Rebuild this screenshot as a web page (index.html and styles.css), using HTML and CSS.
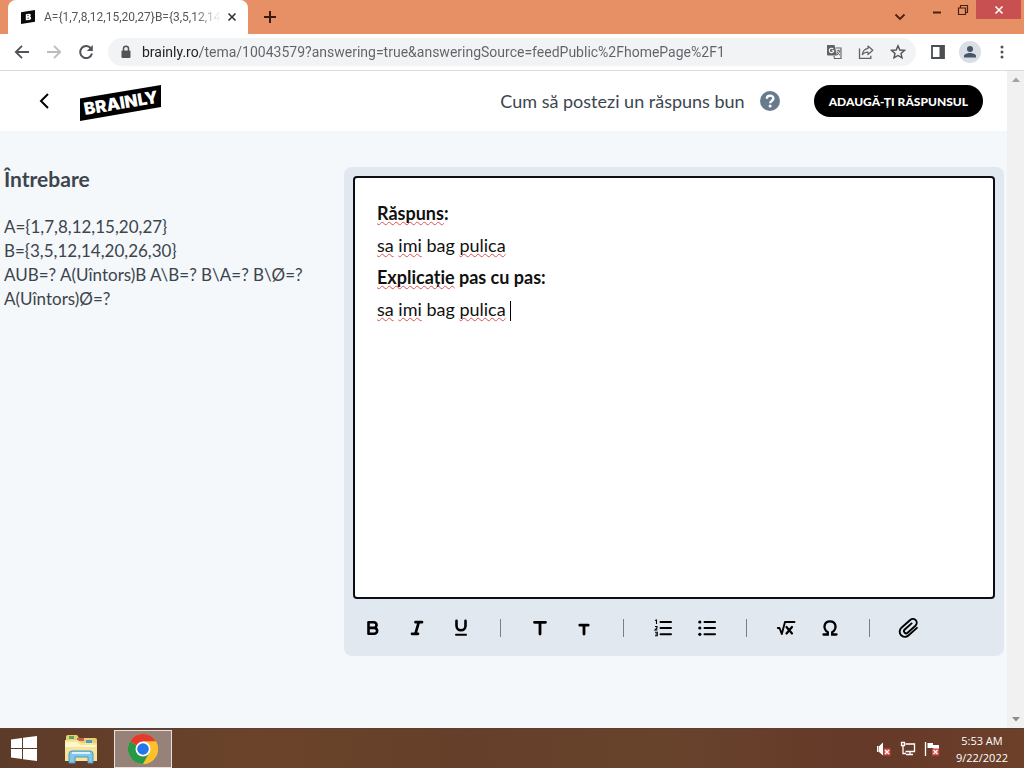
FILE: index.html
```
<!DOCTYPE html>
<html lang="ro">
<head>
<meta charset="utf-8">
<meta name="viewport" content="width=device-width, initial-scale=1">
<title>Brainly</title>
<link rel="stylesheet" href="styles.css">
</head>
<body>
<div class="screen">
  <div class="tabstrip">
    <div class="tab">
      <svg class="favicon" width="14" height="14" viewBox="0 0 14 14" aria-hidden="true"><path d="M0 2.200 14 0v11.800L0 14z" fill="#0b0b0b"/><path d="M4.800 4.200 8 3.700c2-.2 2.300 1.900 1 2.700 1.800.3 1.500 3.300-.8 3.500l-3.400.4z" fill="#fff"/><path d="M6.500 5.500h1M6.500 8.200h1.300" stroke="#0b0b0b" stroke-width="1"/></svg>
      <span class="tab-title">A={1,7,8,12,15,20,27}B={3,5,12,14</span>
      <button class="tab-close" aria-label="Close tab"><svg width="10" height="10" viewBox="0 0 10 10"><path d="M1.500 1.500l7 7M8.500 1.500l-7 7" stroke="#333" stroke-width="1.600"/></svg></button>
    </div>
    <button class="new-tab" aria-label="New tab"><svg width="14" height="14" viewBox="0 0 14 14"><path d="M7 1v12M1 7h12" stroke="#3a1c10" stroke-width="2"/></svg></button>
    <div class="window-controls">
      <button class="search-tabs" aria-label="Search tabs"><svg width="12" height="8" viewBox="0 0 12 8"><path d="M1.500 1.500 6 6l4.500-4.500" fill="none" stroke="#4a2010" stroke-width="1.800"/></svg></button>
      <button class="win-btn" aria-label="Minimize"><svg width="12" height="12" viewBox="0 0 12 12"><path d="M2 8.500h8" stroke="#4a2010" stroke-width="2"/></svg></button>
      <button class="win-btn" aria-label="Restore"><svg width="12" height="12" viewBox="0 0 12 12"><path d="M1.500 4h7v6.500h-7zM3.500 4V1.500h7v7h-2" fill="none" stroke="#4a2010" stroke-width="1.200"/></svg></button>
      <button class="win-btn win-close" aria-label="Close"><svg width="10" height="10" viewBox="0 0 10 10"><path d="M1.500 1.500l7 7M8.500 1.500l-7 7" stroke="#fff" stroke-width="1.600"/></svg></button>
    </div>
  </div>

  <div class="browser-bar">
    <button class="nav-btn" aria-label="Back"><svg width="16" height="16" viewBox="0 0 16 16"><path d="M15 8H2M8 1.800 1.800 8 8 14.200" fill="none" stroke="#505357" stroke-width="1.800"/></svg></button>
    <button class="nav-btn" aria-label="Forward"><svg width="16" height="16" viewBox="0 0 16 16"><path d="M1 8h13M8 1.800 14.200 8 8 14.200" fill="none" stroke="#b9bbbe" stroke-width="1.800"/></svg></button>
    <button class="nav-btn" aria-label="Reload"><svg width="16" height="16" viewBox="0 0 16 16"><path d="M13.200 4.800A6 6 0 1 0 14 9.500" fill="none" stroke="#505357" stroke-width="2"/><path d="M14.800 1v6h-6z" fill="#505357"/></svg></button>
    <div class="omnibox">
      <svg width="10" height="14" viewBox="0 0 10 14" aria-hidden="true"><path d="M2.500 6V3.800a2.500 2.500 0 0 1 5 0V6" fill="none" stroke="#505357" stroke-width="1.500"/><rect x="0.500" y="5.500" width="9" height="7.500" rx="1" fill="#505357"/></svg>
      <input class="url" type="text" aria-label="Address" value="brainly.ro/tema/10043579?answering=true&amp;answeringSource=feedPublic%2FhomePage%2F1">
      <button class="omni-btn" aria-label="Translate"><svg width="16" height="16" viewBox="0 0 16 16"><path d="M1 1h7.500l2.500 10.500H2a1 1 0 0 1-1-1z" fill="#5f6368"/><path d="M9.500 4H15v10.500H8.500L8 12" fill="none" stroke="#5f6368" stroke-width="1.100"/><path d="M7.200 5A2.200 2.200 0 1 0 7.700 6.800H5.700" fill="none" stroke="#fff" stroke-width="1.100"/><path d="M10.500 6.800h4M12.500 5.800v1M13.600 7c-.3 1.800-1.300 3-2.600 4M11.200 8c.5 1.500 1.500 2.400 2.800 3.200" fill="none" stroke="#5f6368"/></svg></button>
      <button class="omni-btn" aria-label="Share"><svg width="16" height="16" viewBox="0 0 16 16"><path d="M1.500 4.500v9.800h11.300v-2.500" fill="none" stroke="#5f6368" stroke-width="1.300"/><path d="M10 2l4.800 4.200L10 10.500V8.200c-2.500-.1-4.300.7-5.700 2.500.4-3.300 2.200-5.800 5.700-6.400z" fill="none" stroke="#5f6368" stroke-width="1.200" stroke-linejoin="round"/></svg></button>
      <button class="omni-btn" aria-label="Bookmark"><svg width="16" height="16" viewBox="0 0 16 16"><path d="M8 1.800l1.800 4.200 4.700.4-3.500 3 1 4.500L8 11.500l-4 2.400 1-4.500-3.500-3 4.700-.4z" fill="none" stroke="#505357" stroke-width="1.400"/></svg></button>
    </div>
    <button class="bar-btn" aria-label="Side panel"><svg width="16" height="16" viewBox="0 0 16 16"><path d="M2 2h12v12H2z" fill="none" stroke="#4b4f54" stroke-width="1.800"/><path d="M9.500 2H14v12H9.500z" fill="#4b4f54"/></svg></button>
    <button class="bar-btn profile" aria-label="Profile"><svg width="14" height="14" viewBox="0 0 14 14"><circle cx="7" cy="4" r="3" fill="#46556a"/><path d="M1 12.500V11c0-2 3.500-3 6-3s6 1 6 3v1.500z" fill="#46556a"/></svg></button>
    <button class="bar-btn" aria-label="Menu"><svg width="4" height="14" viewBox="0 0 4 14"><g fill="#505357"><circle cx="2" cy="2" r="1.500"/><circle cx="2" cy="7" r="1.500"/><circle cx="2" cy="12" r="1.500"/></g></svg></button>
  </div>

  <div class="viewport">
    <div class="page">
      <header class="page-header">
        <button class="back" aria-label="Înapoi"><svg width="12" height="18" viewBox="0 0 12 18"><path d="M10 2 3 9l7 7" fill="none" stroke="#000" stroke-width="2"/></svg></button>
        <a class="logo" href="#" aria-label="Brainly"><svg width="82" height="36" viewBox="0 0 82 36"><path d="M0 13.500 81 0v22L0 36z" fill="#000"/><text class="logo-text" x="5" y="30" transform="rotate(-9.500 5 30)">BRAINLY</text></svg></a>
        <a class="how-to" href="#">Cum să postezi un răspuns bun
          <svg width="20" height="20" viewBox="0 0 20 20" aria-hidden="true"><circle cx="10" cy="10" r="10" fill="#687b8c"/><path d="M6.800 7.800C6.800 3.500 13.400 3.700 13.400 7.500c0 2.300-3.200 2.400-3.200 4.700" fill="none" stroke="#fff" stroke-width="2.400"/><circle cx="10.100" cy="15" r="1.500" fill="#fff"/></svg>
        </a>
        <button class="submit">ADAUGĂ-ȚI RĂSPUNSUL</button>
      </header>
      <main class="content">
        <section class="question">
          <h1>Întrebare</h1>
          <p>A={1,7,8,12,15,20,27}<br>B={3,5,12,14,20,26,30}<br>AUB=? A(Uîntors)B A\B=? B\A=? B\Ø=? A(Uîntors)Ø=?</p>
        </section>
        <section class="editor">
          <div class="editor-text" contenteditable="true" role="textbox" aria-multiline="true" aria-label="Răspuns" spellcheck="false">
            <p><b><span class="typo">Răspuns</span>:</b></p>
            <p><span class="typo">sa</span> <span class="typo">imi</span> bag <span class="typo">pulica</span></p>
            <p><b><span class="typo">Explicație</span> pas cu pas:</b></p>
            <p><span class="typo">sa</span> <span class="typo">imi</span> bag <span class="typo">pulica</span> <span class="caret"></span></p>
          </div>
          <div class="tools" role="toolbar" aria-label="Formatare">
            <button aria-label="Bold"><svg width="20" height="20" viewBox="0 0 20 20"><path d="M5.500 4.200h5.200a2.800 2.800 0 0 1 0 5.700H5.500zM5.500 9.900h5.700a2.900 2.900 0 0 1 0 5.900H5.500z" fill="none" stroke="#000" stroke-width="2.600" stroke-linejoin="round"/></svg></button>
            <button aria-label="Italic"><svg width="20" height="20" viewBox="0 0 20 20"><path d="M8.500 4.200h6.500M5 15.800h6M11.800 4.200 8.400 15.800" fill="none" stroke="#000" stroke-width="2.700" stroke-linecap="round"/></svg></button>
            <button aria-label="Underline"><svg width="20" height="20" viewBox="0 0 20 20"><path d="M5.500 2.800v5a4.500 4.500 0 0 0 9 0v-5" fill="none" stroke="#000" stroke-width="2.600" stroke-linecap="round"/><path d="M5 16.800h10" stroke="#000" stroke-width="2" stroke-linecap="round"/></svg></button>
            <span class="divider"></span>
            <button aria-label="Text mare"><svg width="20" height="20" viewBox="0 0 20 20"><path d="M4.500 4.300h11M10 4.300V16" stroke="#000" stroke-width="2.800" stroke-linecap="round"/></svg></button>
            <button aria-label="Text mic"><svg width="20" height="20" viewBox="0 0 20 20"><path d="M5.800 7.200h8.400M10 7.200V16" stroke="#000" stroke-width="2.800" stroke-linecap="round"/></svg></button>
            <span class="divider"></span>
            <button aria-label="Listă numerotată"><svg width="20" height="20" viewBox="0 0 20 20"><path d="M7.500 4h10.500M7.500 10h10.500M7.500 16.300h10.500" stroke="#000" stroke-width="2" stroke-linecap="round"/><path d="M2 2.500l1.500-.5v4M2 8.500h2V10L2 12h2.500M2 14.200h2.300v3.500H2M2.500 16h1.500" fill="none" stroke="#000" stroke-width="1.100"/></svg></button>
            <button aria-label="Listă"><svg width="20" height="20" viewBox="0 0 20 20"><path d="M7.500 4h10.500M7.500 10h10.500M7.500 16.300h10.500" stroke="#000" stroke-width="2" stroke-linecap="round"/><g fill="#000"><circle cx="2.800" cy="4" r="1.600"/><circle cx="2.800" cy="10" r="1.600"/><circle cx="2.800" cy="16.300" r="1.600"/></g></svg></button>
            <span class="divider"></span>
            <button aria-label="Ecuație"><svg width="20" height="20" viewBox="0 0 20 20"><path d="M1.800 10h1.700l2.300 6L9 4h9.500" fill="none" stroke="#000" stroke-width="1.900" stroke-linecap="round" stroke-linejoin="round"/><path d="M10.500 9l5.500 6.500M16 9l-5.500 6.500" stroke="#000" stroke-width="2.200" stroke-linecap="round"/></svg></button>
            <button aria-label="Simboluri"><svg width="20" height="20" viewBox="0 0 20 20"><path d="M3.500 16.500h4.300v-2.200C2.200 10.500 4.200 3.300 10 3.300s7.800 7.200 2.200 11v2.200h4.300" fill="none" stroke="#000" stroke-width="2.300" stroke-linecap="round"/></svg></button>
            <span class="divider"></span>
            <button aria-label="Atașează"><svg width="22" height="20" viewBox="0 0 22 20"><g transform="rotate(-42 11 10)" fill="none" stroke="#000" stroke-width="1.900" stroke-linecap="round"><path d="M17 15.200H5.500a5.200 5.200 0 0 1 0-10.400H17.300a3.900 3.900 0 0 1 0 7.800H6.800a2.100 2.100 0 0 1 0-4.300H16"/></g></svg></button>
          </div>
        </section>
      </main>
    </div>
    <div class="scrollbar" aria-hidden="true">
      <svg width="8" height="5" viewBox="0 0 8 5"><path d="M0 5l4-4.500L8 5z" fill="#a3a3a3"/></svg>
      <svg width="8" height="5" viewBox="0 0 8 5"><path d="M0 0l4 4.500L8 0z" fill="#8c8c8c"/></svg>
    </div>
  </div>

  <footer class="taskbar">
    <button class="task start" aria-label="Start"><svg width="26" height="25" viewBox="0 0 26 25"><path d="M0 3.500 11 2v10H0zM12 1.800 26 0v12H12zM0 13h11v10L0 21.500zM12 13h14v12l-14-1.800z" fill="#fff"/></svg></button>
    <button class="task" aria-label="File Explorer"><svg width="34" height="32" viewBox="0 0 34 32"><path d="M2 4q0-2 2-2h9l2 3h16q2 0 2 2v21H2z" fill="#e9cf74"/><path d="M5 3h5v3H5z" fill="#5da55c"/><path d="M13 5h7v3h-7z" fill="#c9614a"/><path d="M22 7h6v3h-6z" fill="#4c9fc8"/><path d="M1 7h13l3 3h14q2 0 2 2v16H1z" fill="#f5e49a"/><path d="M1 9h12l3 3h16v2H1z" fill="#fff6c9"/><path d="M5 30V21q0-3 3-3h18q3 0 3 3v9h-5v-6H11v6z" fill="#82c6e8" stroke="#4d98c4"/><path d="M8 20h18" stroke="#d9f2ff" stroke-width="2"/></svg></button>
    <button class="task active" aria-label="Google Chrome"><svg width="30" height="30" viewBox="0 0 30 30"><circle cx="15" cy="15" r="15" fill="#fbc12d"/><path d="M15 15 2 7.500A15 15 0 0 1 28 7.500H15z" fill="#e23b2e"/><path d="M2 7.500A15 15 0 0 0 15 30l6.500-11.200L15 15z" fill="#279847"/><path d="M15 7.500h13A15 15 0 0 1 15 30l6.500-11.200z" fill="#fbc12d"/><circle cx="15" cy="15" r="7.500" fill="#fff"/><circle cx="15" cy="15" r="5.800" fill="#2377e8"/></svg></button>
    <div class="tray">
      <svg width="16" height="16" viewBox="0 0 16 16" aria-label="Volume muted"><path d="M1 5h1.500v6H1zM3 5.200 7 1.500v13L3 11z" fill="#fff"/><path d="M7.500 7.500h7v7h-7z" fill="#d84a48"/><path d="M9 9l4 4M13 9l-4 4" stroke="#fff" stroke-width="1.400"/></svg>
      <svg width="16" height="16" viewBox="0 0 16 16" aria-label="Network"><path d="M5.500 3h9v7.500H5.500M10 10.500V13M6 13.500h7M1.500 1.500h3v3h-3zM3 4.500v8h3" fill="none" stroke="#fff" stroke-width="1.300"/></svg>
      <svg width="16" height="16" viewBox="0 0 16 16" aria-label="Action center"><path d="M1.500 1v14" stroke="#fff" stroke-width="1.300"/><path d="M3.500 2H9v2h6v4.500H9.500V7h-6z" fill="#fff"/><path d="M8 7.500h7v7H8z" fill="#d84a48"/><path d="M9.500 9l4 4M13.500 9l-4 4" stroke="#fff" stroke-width="1.400"/></svg>
    </div>
    <div class="clock"><span>5:53 AM</span><span>9/22/2022</span></div>
  </footer>
</div>
</body>
</html>
```

FILE: styles.css
```
* { box-sizing: border-box; }
body { margin: 0; font-family: "Noto Sans", sans-serif; }
button { border: 0; padding: 0; background: none; font: inherit; display: flex; align-items: center; justify-content: center; }
svg { display: block; flex: none; }
p, h1 { margin: 0; }

.screen { display: flex; flex-direction: column; height: 100vh; }

.tabstrip { display: flex; height: 34px; padding-left: 8px; background: #e78f65; }
.tab { display: flex; align-items: center; width: 240px; padding: 0 9px 0 13px; background: #fff; border-radius: 8px 8px 0 0; }
.tab-title { flex: 1; margin: 0 5px 0 9px; white-space: nowrap; font-family: "Roboto", sans-serif; font-size: 12px; color: #55585c; mask-image: linear-gradient(to right, #000 85%, transparent); }
.tab-close { width: 14px; height: 16px; }
.new-tab { width: 44px; }
.window-controls { display: flex; flex: 1; justify-content: flex-end; align-items: flex-start; padding-right: 3px; }
.search-tabs { width: 24px; height: 34px; margin-right: 12px; }
.win-btn { width: 26px; height: 19px; }
.win-close { width: 45px; background: #c85050; }

.browser-bar { display: flex; align-items: center; height: 37px; padding: 0 6px; background: #fff; border-bottom: 1px solid #d9dbde; }
.nav-btn { width: 32px; height: 28px; }
.omnibox { display: flex; flex: 1; align-items: center; height: 28px; margin: 0 6px; padding: 0 8px 0 13px; background: #f1f3f4; border-radius: 14px; }
.url { flex: 1; min-width: 0; height: 28px; margin-left: 11px; padding: 0; border: 0; outline: 0; font-family: "Roboto", sans-serif; font-size: 14px; color: transparent; background: linear-gradient(to right, #202124 58px, #5f6368 58px); background-clip: text; }
.omni-btn { width: 20px; height: 28px; margin-left: 12px; }
.bar-btn { width: 32px; height: 28px; }
.profile { width: 22px; height: 22px; margin: 0 5px; border-radius: 50%; background: #dadee5; }

.viewport { display: flex; flex: 1; min-height: 0; }
.page { display: flex; flex: 1; flex-direction: column; min-width: 0; background: #f4f8fb; font-family: "Lato", sans-serif; }
.scrollbar { display: flex; flex-direction: column; align-items: center; justify-content: space-between; width: 17px; padding: 6px 0; background: #f1f1f1; }

.page-header { display: flex; align-items: center; height: 60px; padding: 0 24px 0 37px; background: #fff; }
.back { width: 13px; height: 32px; }
.logo { margin: 4px 0 0 30px; }
.logo-text { font-family: "Inter", sans-serif; font-weight: 900; font-size: 17px; fill: #fff; }
.how-to { display: flex; align-items: center; gap: 15px; margin-left: auto; font-size: 18px; color: #3c4650; text-decoration: none; }
.submit { height: 32px; margin-left: 34px; padding: 0 15px; border-radius: 16px; background: #000; color: #fff; font-weight: 900; font-size: 12px; }

.content { display: grid; flex: 1; grid-template-columns: 1fr 2fr; gap: 10px; min-height: 0; padding: 36px 3px 72px 4px; }
.question { color: #3c444c; font-size: 17px; line-height: 24px; }
.question h1 { margin-bottom: 24px; font-size: 21px; line-height: 24px; }
.editor { display: flex; flex-direction: column; padding: 9px 9px 0; border-radius: 8px; background: #e2e8f0; }
.editor-text { flex: 1; padding: 19px 22px; border: 2px solid #0b0e14; border-radius: 4px; outline: 0; background: #fff; color: #111; font-size: 18px; line-height: 32px; }
.typo { text-decoration: underline wavy #d9534f 1px; text-underline-offset: 1px; text-decoration-skip-ink: none; }
.caret { display: inline-block; width: 1px; height: 20px; background: #000; vertical-align: middle; }
.tools { display: flex; align-items: center; gap: 4px; height: 57px; }
.tools button { width: 39px; height: 40px; margin-right: 1px; }
.divider { width: 1px; height: 18px; margin: 0 15px; background: #73818f; }

.taskbar { display: flex; align-items: center; height: 40px; padding-right: 16px; border-top: 1px solid #5a4034; background: linear-gradient(to right, #5d3b29, #6b432a 25%, #653f29 45%, #68432c 65%, #653928 85%, #6c4029); }
.task { width: 58px; height: 38px; margin-right: 4px; }
.start { width: 48px; }
.active { margin-left: 0; border: 1px solid #e8e0dc; background: #97827a; }
.tray { display: flex; gap: 8px; margin-left: auto; }
.clock { display: flex; flex-direction: column; margin-left: 16px; font-family: "Open Sans", sans-serif; font-size: 11px; line-height: 17px; color: #fff; text-align: center; }
```
